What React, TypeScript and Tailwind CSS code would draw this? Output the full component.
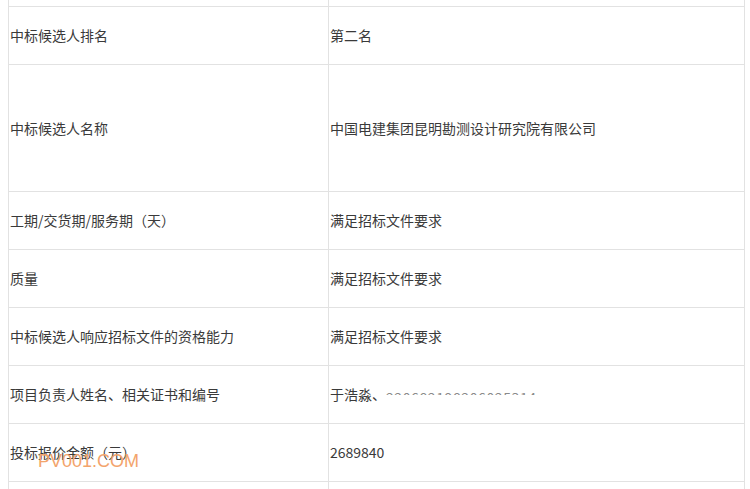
import React from "react";

const rows: { label: string; value: React.ReactNode; h: string }[] = [
  { label: "中标候选人排名", value: "第二名", h: "h-[58px]" },
  { label: "中标候选人名称", value: "中国电建集团昆明勘测设计研究院有限公司", h: "h-[127px]" },
  { label: "工期/交货期/服务期（天）", value: "满足招标文件要求", h: "h-[58px]" },
  { label: "质量", value: "满足招标文件要求", h: "h-[58px]" },
  { label: "中标候选人响应招标文件的资格能力", value: "满足招标文件要求", h: "h-[58px]" },
  {
    label: "项目负责人姓名、相关证书和编号",
    value: (
      <span className="flex items-center">
        <span>于浩淼、</span>
        <span className="inline-block h-[7px] overflow-hidden leading-[18px] text-[14px] text-[#8a8a8a] tracking-[0.6px] mt-[-6px]">
          220682198206025314
        </span>
      </span>
    ),
    h: "h-[58px]",
  },
  { label: "投标报价金额（元）", value: "2689840", h: "h-[58px]" },
];

export default function App() {
  return (
    <div
      className="relative w-[750px] h-[489px] overflow-hidden bg-white text-[14px] text-[#3a3a3a]"
      style={{ fontFamily: '"Noto Sans CJK SC", "Noto Sans", sans-serif' }}
    >
      <div className="ml-[8px] w-[737px] border-l border-r border-[#e2e2e2]">
        <div className="grid grid-cols-[320px_416px] h-[7px] border-b border-[#e2e2e2]">
          <div className="border-r border-[#e2e2e2]" />
          <div />
        </div>
        {rows.map((r, i) => (
          <div key={i} className={`grid grid-cols-[320px_416px] border-b border-[#e2e2e2] ${r.h}`}>
            <div className="flex items-center border-r border-[#e2e2e2] pl-px">{r.label}</div>
            <div className="flex items-center pl-px">{r.value}</div>
          </div>
        ))}
        <div className="grid grid-cols-[320px_416px] h-[20px]">
          <div className="border-r border-[#e2e2e2]" />
          <div />
        </div>
      </div>
      <div
        className="absolute left-[38px] top-[451px] text-[18px] leading-[21px] text-[#f3a46c]"
        style={{ fontFamily: '"Liberation Sans", sans-serif' }}
      >
        PV001.COM
      </div>
    </div>
  );
}
